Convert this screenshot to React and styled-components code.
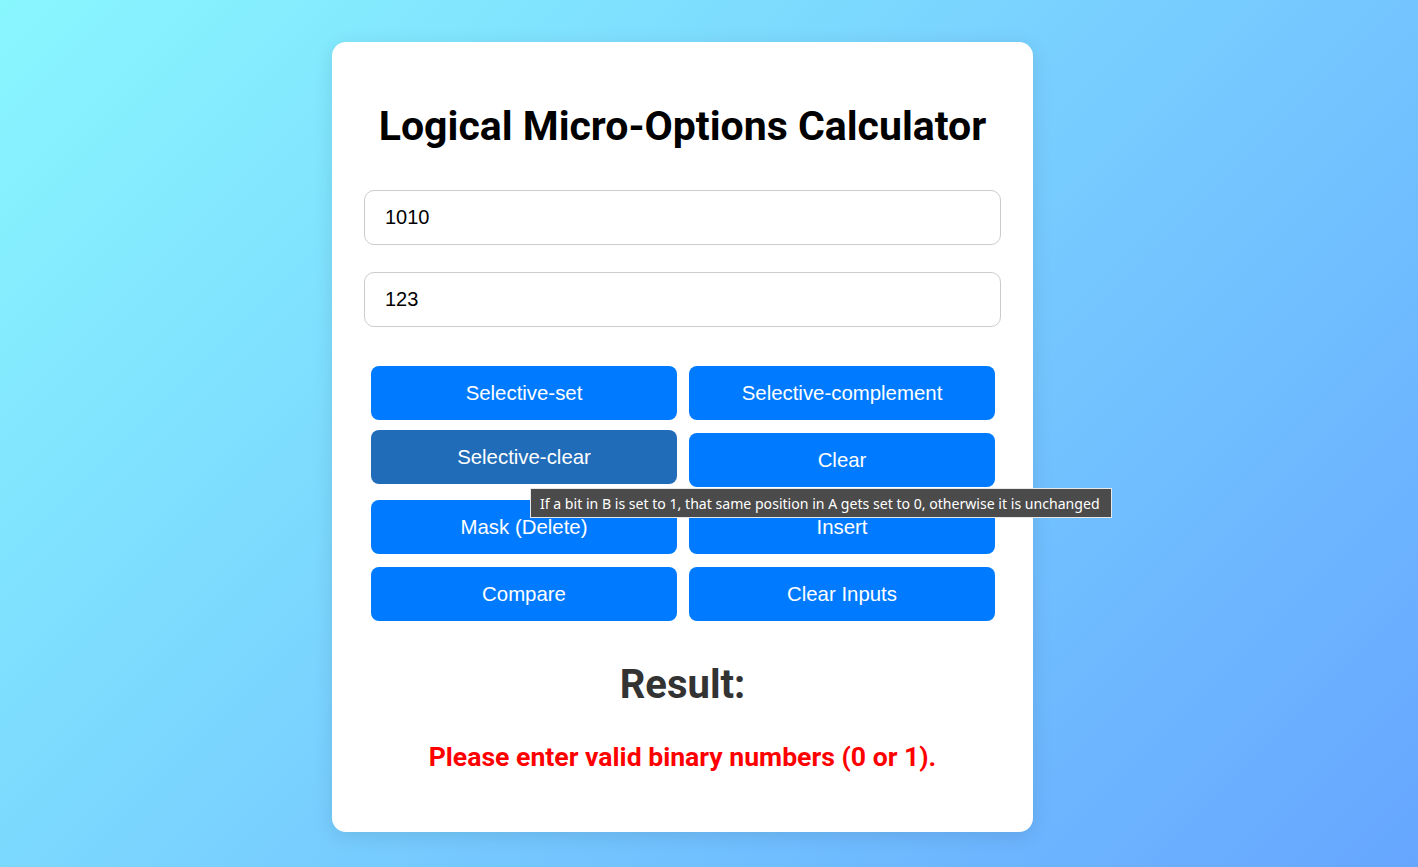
import React, { useState } from 'react'
import styled, { createGlobalStyle } from 'styled-components'

const GlobalStyle = createGlobalStyle`
  html, body {
    margin: 0;
    padding: 0;
  }
  body {
    min-height: 867px;
    background: linear-gradient(135deg, #89f7fe 0%, #66a6ff 100%);
    font-family: "Liberation Sans", Arial, sans-serif;
  }
`

const operations = [
  { label: 'Selective-set', tip: 'If a bit in B is set to 1, that same position in A gets set to 1, otherwise it is unchanged' },
  { label: 'Selective-complement', tip: 'If a bit in B is set to 1, that same position in A gets complemented, otherwise it is unchanged' },
  { label: 'Selective-clear', tip: 'If a bit in B is set to 1, that same position in A gets set to 0, otherwise it is unchanged' },
  { label: 'Clear', tip: 'Compares A and B, bits that match are set to 0' },
  { label: 'Mask (Delete)', tip: 'If a bit in B is set to 0, that same position in A gets set to 0, otherwise it is unchanged' },
  { label: 'Insert', tip: 'Inserts the bits of B into A' },
  { label: 'Compare', tip: 'Compares A and B bit by bit' },
  { label: 'Clear Inputs', tip: 'Clears both inputs' },
]

const App = () => {
  const [a, setA] = useState('1010')
  const [b, setB] = useState('123')
  const [hovered] = useState('Selective-clear')

  const hoveredOp = operations.find(op => op.label === hovered)

  return (
    <>
      <GlobalStyle />
      <Page>
        <Card>
          <Title>Logical Micro-Options Calculator</Title>
          <Field value={a} onChange={e => setA(e.target.value)} />
          <Field value={b} onChange={e => setB(e.target.value)} />
          <ButtonGrid>
            {operations.map(op => (
              <OpButton key={op.label} $active={op.label === hovered}>
                {op.label}
              </OpButton>
            ))}
          </ButtonGrid>
          <ResultHeading>Result:</ResultHeading>
          <ErrorText>Please enter valid binary numbers (0 or 1).</ErrorText>
          {hoveredOp && <Tooltip>{hoveredOp.tip}</Tooltip>}
        </Card>
      </Page>
    </>
  )
}

export default App

const Page = styled.div`
  display: flex;
  justify-content: center;
  padding: 42px 53px 35px 0;
`

const Card = styled.div`
  position: relative;
  width: 701px;
  box-sizing: border-box;
  padding: 32px 32px 60px;
  background: #fff;
  border-radius: 14px;
  box-shadow: 0 4px 20px rgba(0, 0, 0, 0.1);
  text-align: center;
`

const Title = styled.h1`
  font-family: Roboto, "Liberation Sans", sans-serif;
  font-weight: 700;
  font-size: 41px;
  line-height: 47px;
  color: #000;
  margin: 29px 0 40px;
`

const Field = styled.input`
  display: block;
  width: 100%;
  height: 55px;
  box-sizing: border-box;
  padding: 0 20px;
  margin: 0 0 27px;
  border: 1px solid #ccc;
  border-radius: 10px;
  font-family: "Liberation Sans", Arial, sans-serif;
  font-size: 20px;
  color: #000;
  outline: none;
`

const ButtonGrid = styled.div`
  display: grid;
  grid-template-columns: 1fr 1fr;
  column-gap: 12px;
  row-gap: 13px;
  padding: 0 6px 0 7px;
  margin-top: 39px;
`

const OpButton = styled.button`
  height: 54px;
  border: none;
  border-radius: 8px;
  background: ${p => (p.$active ? '#216cb9' : '#007bff')};
  color: #fff;
  font-family: "Liberation Sans", Arial, sans-serif;
  font-size: 20.4px;
  cursor: pointer;
  transform: ${p => (p.$active ? 'translateY(-3px)' : 'none')};
`

const ResultHeading = styled.h2`
  font-family: Roboto, "Liberation Sans", sans-serif;
  font-weight: 700;
  font-size: 40px;
  line-height: 47px;
  color: #333;
  margin: 40px 0 35px;
`

const ErrorText = styled.p`
  font-family: Roboto, "Liberation Sans", sans-serif;
  font-weight: 700;
  font-size: 26.6px;
  line-height: 30px;
  color: #ff0000;
  margin: -1px 0 0;
`

const Tooltip = styled.div`
  position: absolute;
  left: 198px;
  top: 446px;
  width: 582px;
  height: 30px;
  box-sizing: border-box;
  padding: 0 9px;
  display: flex;
  align-items: center;
  white-space: nowrap;
  background: #4b4b4b;
  border: 1px solid #e8e8e8;
  color: #fff;
  font-family: "Noto Sans", "Open Sans", sans-serif;
  font-size: 14.1px;
  text-align: left;
`
